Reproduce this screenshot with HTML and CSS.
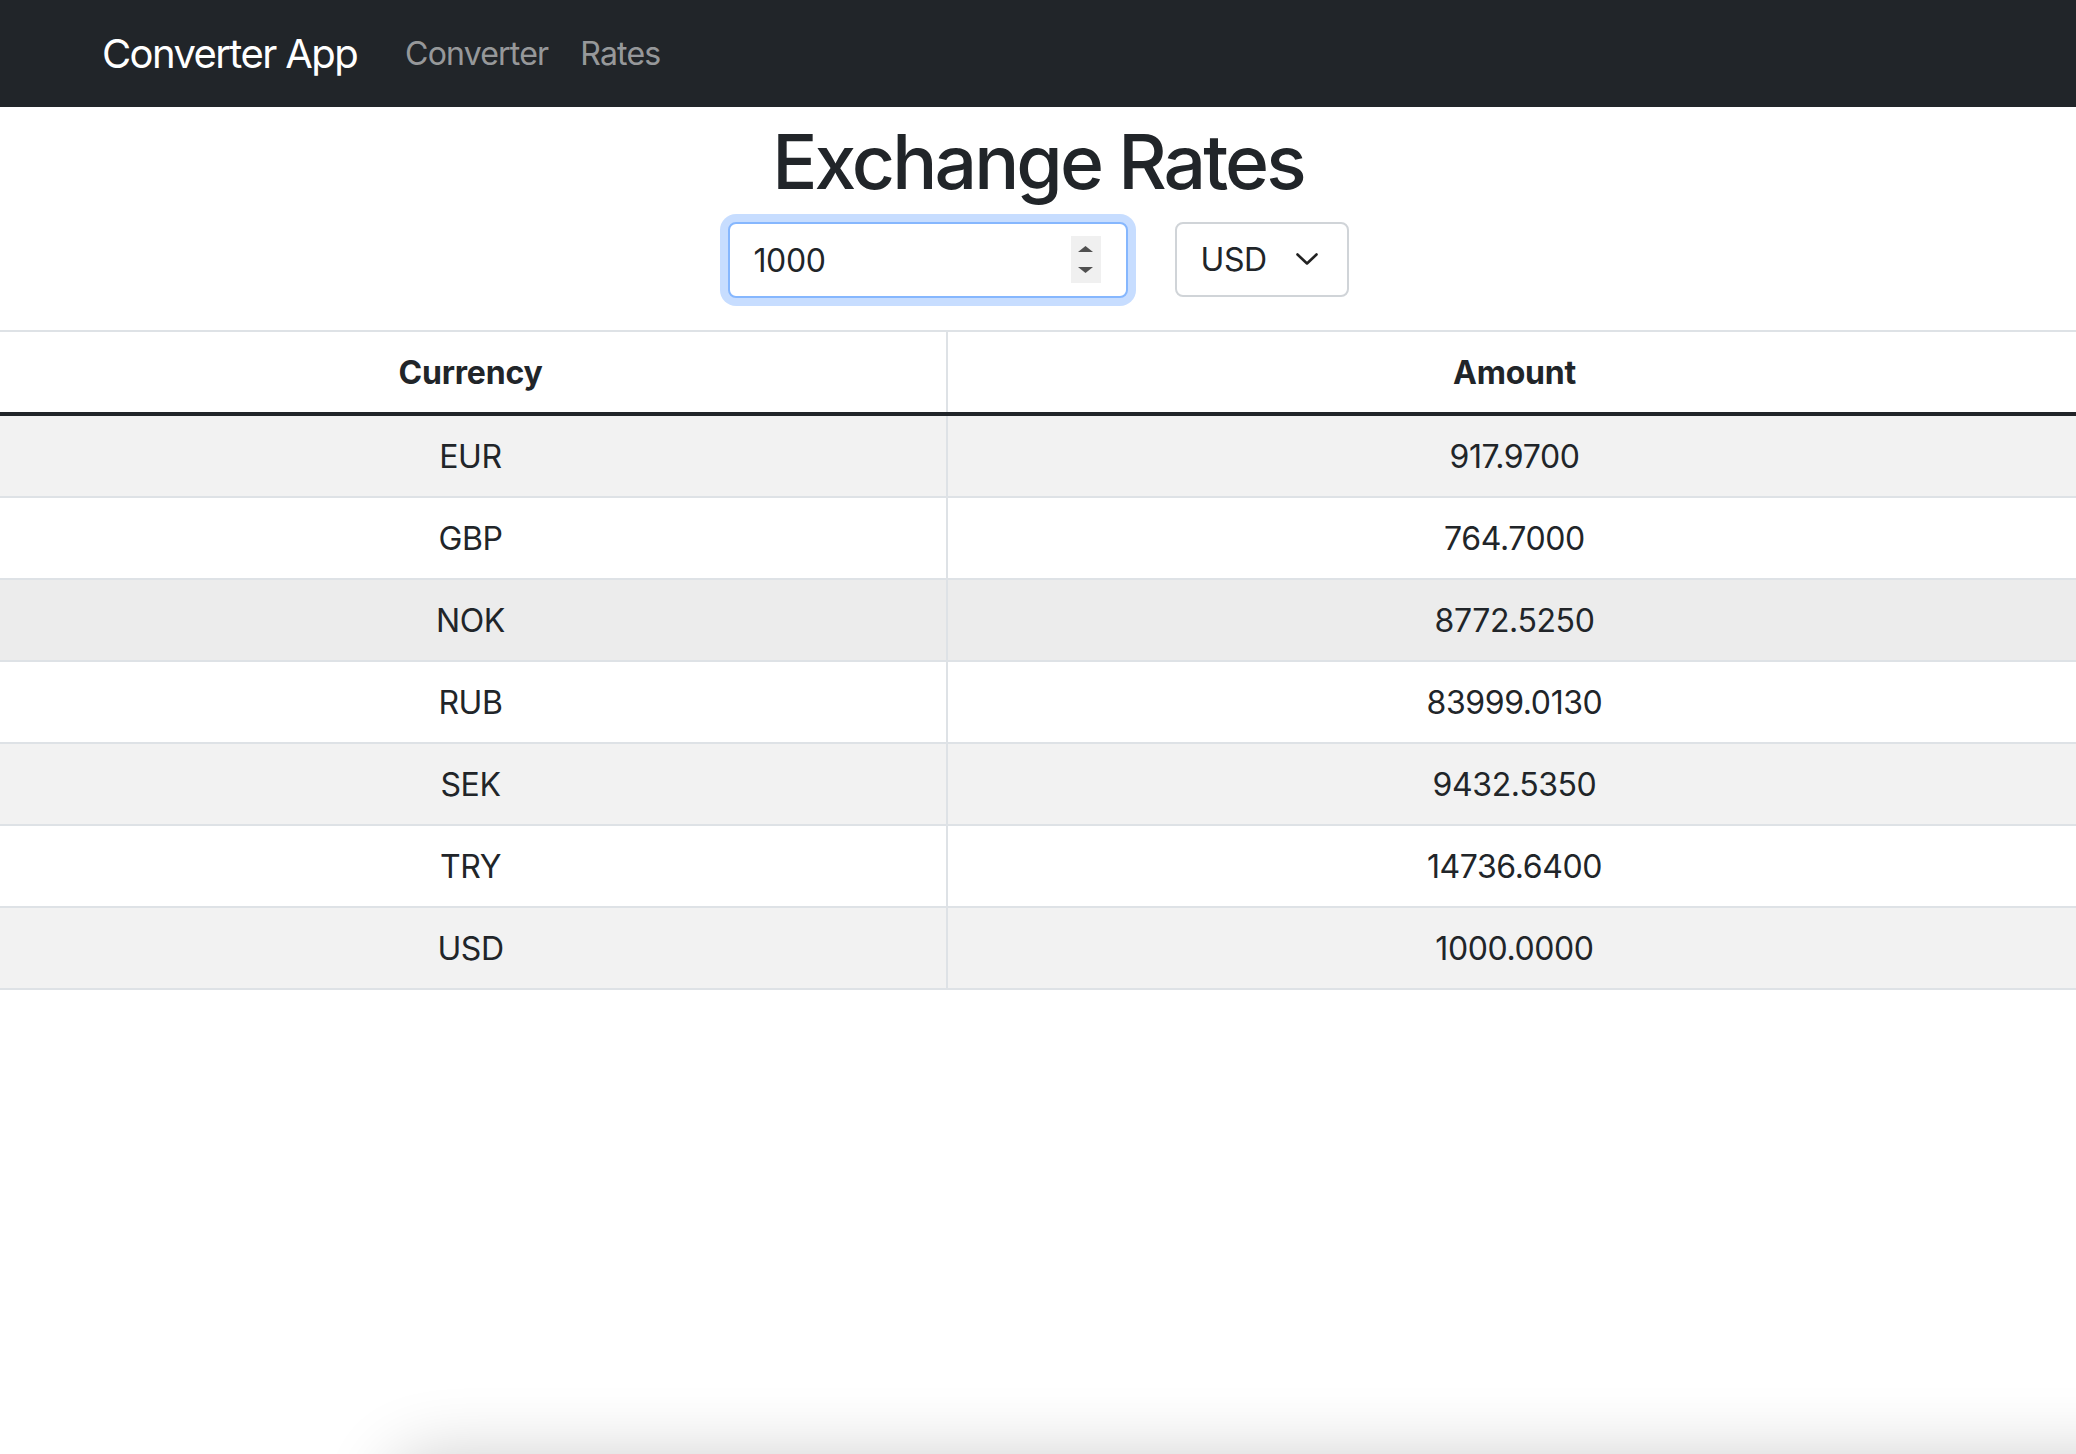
FILE: index.html
```html
<!DOCTYPE html>
<html lang="en">
<head>
<meta charset="utf-8">
<title>Converter App</title>
<link rel="stylesheet" href="styles.css">
</head>
<body>
<nav class="navbar">
  <div class="container">
    <a class="brand" href="#">Converter App</a>
    <ul class="nav">
      <li><a class="nav-link" href="#">Converter</a></li>
      <li><a class="nav-link" href="#">Rates</a></li>
    </ul>
  </div>
</nav>
<main class="page">
  <h1 class="title">Exchange Rates</h1>
  <div class="controls">
    <div class="amount-field">
      <input class="amount-input" type="number" value="1000">
      <span class="spinner">
        <svg width="15" height="28" viewBox="0 0 15 28"><path d="M7.5 0 L15 6 L0 6 Z" fill="#505050"/><path d="M0 21 L15 21 L7.5 27 Z" fill="#505050"/></svg>
      </span>
    </div>
    <div class="select-field">
      <select class="currency-select">
        <option>USD</option>
        <option>EUR</option>
        <option>GBP</option>
      </select>
      <svg class="chevron" width="22" height="12" viewBox="0 0 22 12"><path d="M1.5 1.5 L11 10.5 L20.5 1.5" fill="none" stroke="#222" stroke-width="2.6" stroke-linecap="round" stroke-linejoin="round"/></svg>
    </div>
  </div>
  <table class="rates">
    <thead>
      <tr><th class="col-cur">Currency</th><th>Amount</th></tr>
    </thead>
    <tbody>
      <tr class="odd"><td>EUR</td><td>917.9700</td></tr>
      <tr><td>GBP</td><td>764.7000</td></tr>
      <tr class="hover"><td>NOK</td><td>8772.5250</td></tr>
      <tr><td>RUB</td><td>83999.0130</td></tr>
      <tr class="odd"><td>SEK</td><td>9432.5350</td></tr>
      <tr><td>TRY</td><td>14736.6400</td></tr>
      <tr class="odd"><td>USD</td><td>1000.0000</td></tr>
    </tbody>
  </table>
</main>
<div class="bottom-shadow"></div>
</body>
</html>
```

FILE: styles.css
```css
html, body {
  margin: 0;
  padding: 0;
  background: #fff;
}
body {
  font-family: Inter, "Noto Sans", "Liberation Sans", sans-serif;
  color: #212529;
  font-size: 32px;
  line-height: 1.5;
  overflow: hidden;
}
.navbar {
  background: #212529;
  height: 107px;
  display: flex;
  align-items: center;
}
.container {
  width: 1920px;
  margin: 0 auto;
  padding: 0 24px;
  box-sizing: border-box;
  display: flex;
  align-items: center;
}
.brand {
  color: #fff;
  font-size: 40px;
  line-height: 60px;
  text-decoration: none;
  margin-right: 32px;
  letter-spacing: -1.6px;
}
.nav {
  list-style: none;
  margin: 0;
  padding: 0;
  display: flex;
}
.nav-link {
  display: block;
  color: rgba(255, 255, 255, 0.55);
  text-decoration: none;
  font-size: 32px;
  line-height: 48px;
  padding: 0 16px;
  letter-spacing: -0.8px;
}
.page {
  display: flex;
  flex-direction: column;
  align-items: center;
}
.title {
  font-size: 75px;
  font-weight: 500;
  line-height: 90px;
  margin: 10px 0 15px;
  letter-spacing: -2.9px;
}
.controls {
  display: flex;
  gap: 47px;
  margin-bottom: 32px;
}
.amount-field {
  position: relative;
}
.amount-input {
  box-sizing: border-box;
  width: 400px;
  height: 76px;
  border: 2px solid #86b7fe;
  border-radius: 8px;
  box-shadow: 0 0 0 8px rgba(13, 110, 253, 0.23);
  padding: 0 24px;
  font: inherit;
  letter-spacing: -0.4px;
  color: #212529;
  outline: none;
  -moz-appearance: textfield;
}
.amount-input::-webkit-inner-spin-button,
.amount-input::-webkit-outer-spin-button {
  -webkit-appearance: none;
  margin: 0;
}
.spinner {
  position: absolute;
  left: 343px;
  top: 14px;
  width: 30px;
  height: 47px;
  background: #f0f0f0;
  display: flex;
  align-items: center;
  justify-content: center;
}
.select-field {
  position: relative;
}
.currency-select {
  -webkit-appearance: none;
  appearance: none;
  box-sizing: border-box;
  width: 174px;
  height: 75px;
  border: 2px solid #d0d4d8;
  border-radius: 8px;
  background: #fff;
  padding: 0 0 0 24px;
  font: inherit;
  letter-spacing: -0.4px;
  color: #212529;
  outline: none;
}
.chevron {
  position: absolute;
  left: 121px;
  top: 31px;
  pointer-events: none;
}
.rates {
  width: calc(100% + 10px);
  margin: 0 -5px;
  border-collapse: collapse;
  border-top: 2px solid #dee2e6;
}
.rates th,
.rates td {
  text-align: center;
  padding: 17px 16px 15px;
  height: 48px;
  line-height: 48px;
  border-bottom: 2px solid #dee2e6;
  letter-spacing: -0.4px;
}
.rates th {
  font-weight: 700;
  border-bottom: 4px solid #212529;
  letter-spacing: -0.2px;
}
.rates th + th,
.rates td + td {
  border-left: 2px solid #dee2e6;
}
.col-cur {
  width: 919px;
}
.rates tr.odd td {
  background: #f2f2f2;
}
.rates tr.hover td {
  background: #ececec;
}
.bottom-shadow {
  position: fixed;
  left: 390px;
  top: 1456px;
  width: 2200px;
  height: 300px;
  border-radius: 40px;
  box-shadow: 0 0 70px rgba(0, 0, 0, 0.2);
}
```
